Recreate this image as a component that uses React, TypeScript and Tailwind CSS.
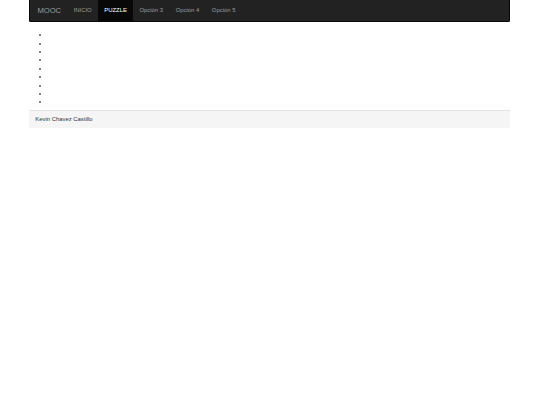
export default function App() {
    const items = ['INICIO', 'PUZZLE', 'Opción 3', 'Opción 4', 'Opción 5'];
    const active = 'PUZZLE';

    return (
        <div className="min-h-[405px] bg-white font-['Liberation_Sans',Arial,sans-serif] text-[5.9px] text-[#333]">
            <div className="mx-auto w-[482px] pr-[1px]">
                <nav className="flex h-[21.5px] items-stretch rounded-b-[1.7px] border border-t-0 border-[#080808] bg-[#222] pl-[1.2px] pr-[0.5px]">
                    <a className="flex items-center px-[6.3px] text-[7.6px] text-[#9d9d9d]">MOOC</a>
                    <ul className="flex items-stretch">
                        {items.map(item => (
                            <li
                                key={item}
                                className={
                                    item === active
                                        ? 'flex items-center bg-[#080808] px-[6.3px] text-white'
                                        : 'flex items-center px-[6.3px] text-[#9d9d9d]'
                                }
                            >
                                {item}
                            </li>
                        ))}
                    </ul>
                </nav>

                <ul className="mt-[8.6px] mb-[4.2px] list-disc pl-[20px] leading-[8.4px] text-[#555]">
                    {Array.from({ length: 9 }).map((_, i) => (
                        <li key={i}>&nbsp;</li>
                    ))}
                </ul>

                <footer className="flex h-[17.7px] items-center border-t border-[#e5e5e5] bg-[#f5f5f5] px-[6.3px] text-[#333]">
                    Kevin Chavez Castillo
                </footer>
            </div>
        </div>
    );
}
